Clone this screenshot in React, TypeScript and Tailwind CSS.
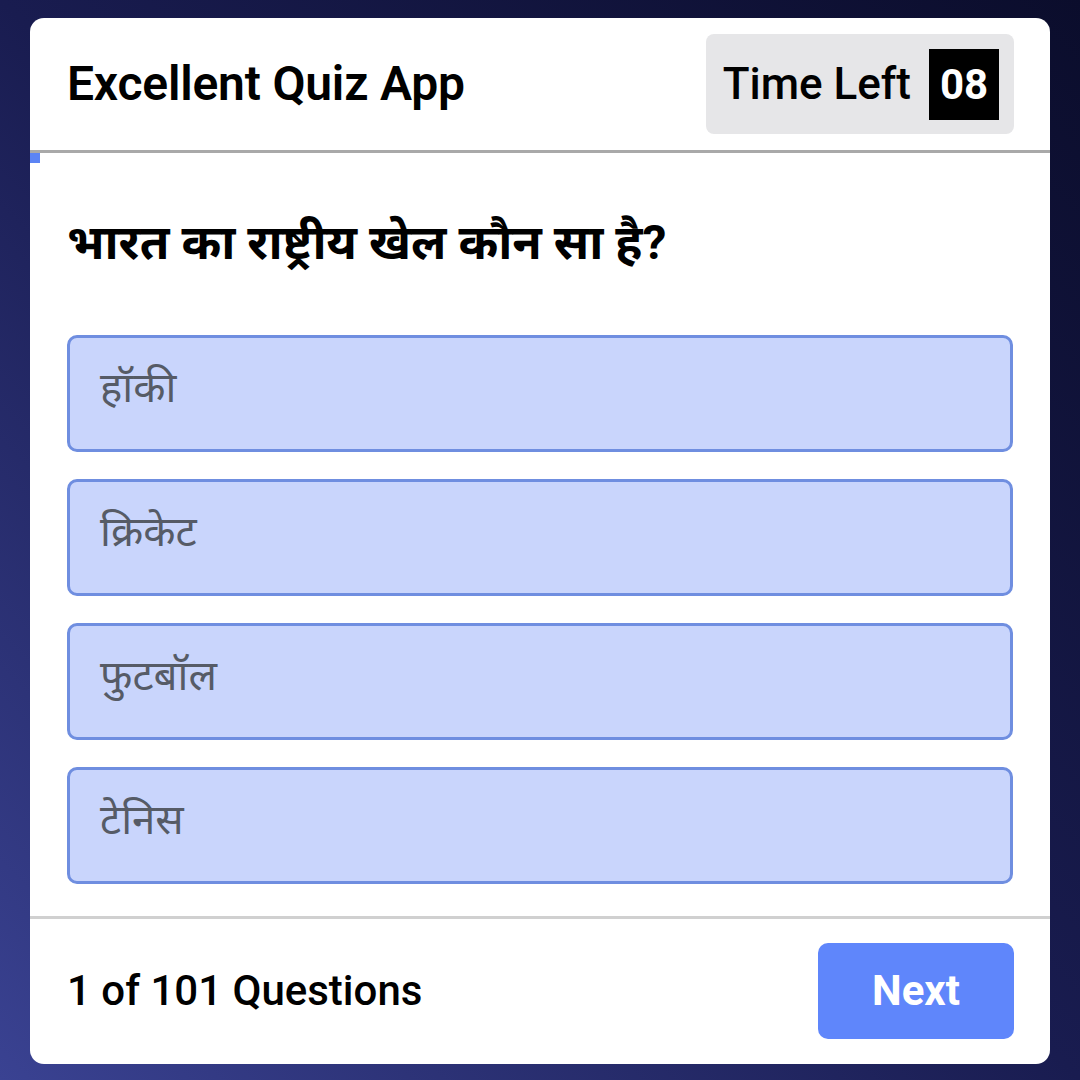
const options = ['हॉकी', 'क्रिकेट', 'फुटबॉल', 'टेनिस']

export default function App() {
    return (
        <div className="w-[1080px] h-[1080px] bg-linear-to-tr from-[#3a4292] via-[#191c50] to-[#0b0d2c] pt-[18px] px-[30px] font-['Roboto','Noto_Sans','Noto_Sans_Devanagari',sans-serif]">
            <div className="bg-white rounded-[14px] h-[1046px] flex flex-col overflow-hidden">
                {/* Header */}
                <div className="flex items-center justify-between h-[135px] pl-[37px] pr-[36px] border-b-[3px] border-[#a9a9a9]">
                    <h1 className="text-[48px] font-semibold text-black tracking-[-0.2px]">Excellent Quiz App</h1>
                    <div className="flex items-center gap-[18px] bg-[#e6e6e8] rounded-[8px] h-[100px] pl-[17px] pr-[15px]">
                        <span className="text-[44px] font-medium text-black">Time Left</span>
                        <span className="w-[70px] h-[71px] bg-black text-white text-[42px] font-bold flex items-center justify-center">08</span>
                    </div>
                </div>

                {/* Progress */}
                <div className="h-[10px] w-[10px] bg-[#5c84f4]" />

                {/* Body */}
                <div className="flex-1 px-[37px]">
                    <h2 className="mt-[48px] text-[48px] font-bold text-black leading-[64px]">भारत का राष्ट्रीय खेल कौन सा है?</h2>
                    <div className="mt-[60px] flex flex-col gap-[27px]">
                        {options.map((o) => (
                            <div key={o} className="h-[117px] bg-[#c9d5fc] border-[3px] border-[#6f8ee0] rounded-[10px] pl-[30px] pt-[20px]">
                                <span className="text-[42px] text-[#565b66] leading-[60px]">{o}</span>
                            </div>
                        ))}
                    </div>
                </div>

                {/* Footer */}
                <div className="h-[148px] border-t-[3px] border-[#d0d0d0] flex items-center justify-between pl-[37px] pr-[36px] pb-[2px]">
                    <span className="text-[42px] font-medium text-black">1 of 101 Questions</span>
                    <button className="w-[196px] h-[96px] bg-[#5f86fb] rounded-[10px] text-white text-[42px] font-bold">Next</button>
                </div>
            </div>
        </div>
    )
}
